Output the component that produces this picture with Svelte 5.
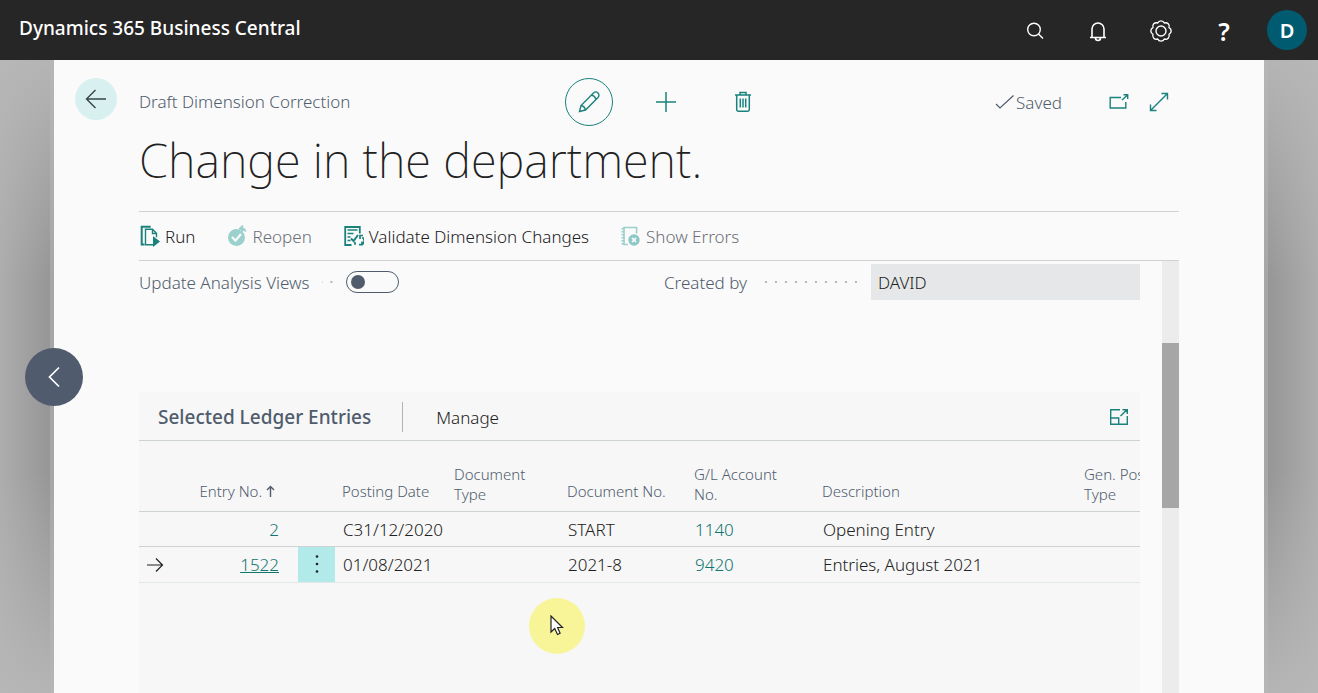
<script>
  let updateViews = $state(false);
  const entries = [
    { no: '2', date: 'C31/12/2020', doc: 'START', account: '1140', text: 'Opening Entry', current: false },
    { no: '1522', date: '01/08/2021', doc: '2021-8', account: '9420', text: 'Entries, August 2021', current: true }
  ];
</script>

<div class="page">
  <header class="top">
    <h1>Dynamics 365 Business Central</h1>
    <div class="tools">
      <button aria-label="Search"><svg width="20" height="20" viewBox="0 0 20 20"><circle cx="9" cy="8.500" r="6.300"/><path d="M13.500 13l4.500 4.500"/></svg></button>
      <button aria-label="Notifications"><svg width="20" height="22" viewBox="0 0 20 22"><path d="M2 17.500h16M4 17.500V9a6 6 0 0 1 12 0v8.500M7.500 18a2.500 2.500 0 0 0 5 0" stroke-width="1.600"/></svg></button>
      <button aria-label="Settings"><svg width="24" height="24" viewBox="0 0 24 24" stroke-linejoin="round"><circle cx="12" cy="12" r="5"/><path d="M20 15.300A3.600 3.600 0 0 1 15.300 20A3.600 3.600 0 0 1 8.700 20A3.600 3.600 0 0 1 4 15.300A3.600 3.600 0 0 1 4 8.700A3.600 3.600 0 0 1 8.700 4A3.600 3.600 0 0 1 15.300 4A3.600 3.600 0 0 1 20 8.700A3.600 3.600 0 0 1 20 15.300Z"/></svg></button>
      <button class="help" aria-label="Help">?</button>
    </div>
    <button class="avatar" aria-label="Account">D</button>
  </header>

  <div class="backdrop">
    <button class="previous" aria-label="Previous record"><svg width="14" height="22" viewBox="0 0 14 22"><path d="M12 1.500L2.500 11l9.500 9.500" stroke-width="1.700"/></svg></button>
    <main class="sheet">
      <button class="back" aria-label="Back"><svg width="22" height="20" viewBox="0 0 22 20"><path d="M21 10H2M10.500 1L1.500 10l9 9"/></svg></button>
      <div class="body">
        <div class="bar">
          <span class="caption">Draft Dimension Correction</span>
          <div class="actions">
            <button class="edit" aria-label="Edit"><svg width="24" height="24" viewBox="0 0 24 24"><path d="M2.500 21.500L4 15.500 16.500 3a3 3 0 0 1 4.500 4.500L8.500 20ZM4 15.500q3.500.5 4.500 4.500M14.500 5q3.500.8 4.500 4.500"/></svg></button>
            <button aria-label="New"><svg width="22" height="22" viewBox="0 0 22 22"><path d="M11 1v20M1 11h20" stroke-width="1.500"/></svg></button>
            <button aria-label="Delete"><svg width="18" height="22" viewBox="0 0 18 22"><path d="M1 4h16M6 3.500V1.500h6v2M2.700 4.500v14a1.700 1.700 0 0 0 1.700 1.700h9.200a1.700 1.700 0 0 0 1.700-1.700v-14M6.300 7.500v9M9 7.500v9M11.700 7.500v9" stroke-width="1.500"/></svg></button>
          </div>
          <div class="status">
            <span class="saved"><svg width="20" height="16" viewBox="0 0 20 16"><path d="M1 10l4 4L18.500 1.500" stroke-width="1.200"/></svg>Saved</span>
            <button class="open" aria-label="Open in new window"><svg width="20" height="18" viewBox="0 0 20 18"><path d="M12 4.500H1.200v10.500h15.600V9M13 7L18.500 2M14.500 1.700h4.200V6"/></svg></button>
            <button aria-label="Expand"><svg width="20" height="20" viewBox="0 0 20 20"><path d="M1.500 18.500l17-17M12.500 1.500h6v6M1.500 12.500v6h6"/></svg></button>
          </div>
        </div>
        <h2>Change in the department.</h2>
        <nav>
          <button><svg width="20" height="22" viewBox="0 0 20 22"><path d="M4.500 19.500H1.700V1.700h9" stroke-width="2"/><path d="M13 19.700H5.500V4.200h7l4 4v4M12.500 4.500v4h4"/><path d="M13.700 12.500l5.300 4-5.300 4Z" fill="#1a827c"/></svg>Run</button>
          <button class="off"><svg width="20" height="22" viewBox="0 0 20 22"><circle cx="9.500" cy="12.500" r="8.500" fill="#9bd0cd" stroke="none"/><path d="M5 12l3.500 3.700L14 9" stroke="#fafafa" stroke-width="2.200"/><path d="M19 6.500q-1-3.500-6-3" stroke="#fafafa" stroke-width="5"/><path d="M18.500 6.500q-1-3.500-5-3M16 .8l-3 2.700L16 6.300" stroke="#9bd0cd" stroke-width="2"/></svg>Reopen</button>
          <button><svg width="20" height="22" viewBox="0 0 20 22"><path d="M7.500 20H1.200V2h14.600v6.500" stroke-width="1.800"/><path d="M3.500 5h10M3.500 8.500h6M3.500 12h3M3.500 15.500h3"/><path d="M7 13.500l2.500 2.500 4.500-6" stroke-width="2"/><path d="M18.300 12.500a4 4 0 0 1-.3 7M18 16.500v3.200h-3M11.500 19.800a4 4 0 0 1-.5-3M16 14v-3.500h3" stroke-width="1.700"/></svg>Validate Dimension Changes</button>
          <button class="off"><svg width="20" height="22" viewBox="0 0 20 22"><path d="M7 19.500H3V2.500h12.600v6" stroke="#9bd0cd" stroke-width="1.600"/><path d="M2 3v17" stroke="#9bd0cd" stroke-width="3" stroke-dasharray="1.500 1.500"/><circle cx="13" cy="15" r="5.700" fill="#8cc8c5" stroke="none"/><path d="M10.900 12.900l4.200 4.200m0-4.200l-4.200 4.200" stroke="#fafafa" stroke-width="1.500"/></svg>Show Errors</button>
        </nav>
        <div class="view">
          <div class="content">
            <div class="fields">
              <div class="field">
                <label for="views">Update Analysis Views</label><i class="dots"></i>
                <input id="views" type="checkbox" role="switch" bind:checked={updateViews} />
              </div>
              <div class="field">
                <label for="creator">Created by</label><i class="dots"></i>
                <input id="creator" type="text" readonly value="DAVID" />
              </div>
            </div>
            <section>
              <div class="part">
                <h3>Selected Ledger Entries</h3>
                <button>Manage</button>
                <button class="focus" aria-label="Focus mode"><svg width="20" height="18" viewBox="0 0 20 18"><path d="M11 1.700H1.700v14.600h16.600V8M1.700 10h8v6.300M11.500 8L18 1.700M13.500 1.700h4.800V6"/></svg></button>
              </div>
              <table>
                <colgroup><col class="c-mark"/><col class="c-no"/><col class="c-menu"/><col class="c-date"/><col class="c-type"/><col class="c-doc"/><col class="c-acc"/><col/><col class="c-gen"/></colgroup>
                <thead>
                  <tr>
                    <th></th>
                    <th class="num">Entry No. <svg width="9" height="12" viewBox="0 0 9 12"><path d="M4.500 12V1.500M1 5l3.500-3.500L8 5"/></svg></th>
                    <th></th><th>Posting Date</th><th class="two">Document Type</th><th>Document No.</th><th class="two">G/L Account No.</th><th>Description</th><th class="two">Gen. Posting Type</th>
                  </tr>
                </thead>
                <tbody>
                  {#each entries as e}
                    <tr class:current={e.current}>
                      <td class="mark">{#if e.current}<svg width="17" height="16" viewBox="0 0 17 16"><path d="M0 8h15.500M9 1.500L15.500 8 9 14.500" stroke-width="1.200"/></svg>{/if}</td>
                      <td class="num"><a href="#entry">{e.no}</a></td>
                      <td class="menu">{#if e.current}<button aria-label="Row menu"><svg width="4" height="20" viewBox="0 0 4 20"><circle cx="2" cy="2.500" r="1.300"/><circle cx="2" cy="10" r="1.300"/><circle cx="2" cy="17.500" r="1.300"/></svg></button>{/if}</td>
                      <td>{e.date}</td><td></td><td>{e.doc}</td>
                      <td><a href="#account">{e.account}</a></td>
                      <td>{e.text}</td><td></td>
                    </tr>
                  {/each}
                </tbody>
              </table>
            </section>
          </div>
          <div class="track"><div class="thumb"></div></div>
        </div>
      </div>
    </main>
  </div>
  <div class="pointer"><svg width="14" height="22" viewBox="0 0 14 22"><path d="M1 1v16l3.700-3.500L7.500 19.500l2.600-1.200L7.600 12.500H12.500Z" fill="#fff" stroke="#222" stroke-width="1.200"/></svg></div>
</div>

<style>
  :global(body) { margin: 0; }
  * { box-sizing: border-box; }
  .page { height: 100vh; display: flex; flex-direction: column; position: relative; overflow: hidden; font-family: "Noto Sans", "Open Sans", sans-serif; font-size: 17px; font-weight: 300; color: #212121; }
  button { border: 0; padding: 0; background: none; font: inherit; color: inherit; display: flex; align-items: center; justify-content: center; }
  svg { fill: none; stroke: currentColor; stroke-width: 1.400; flex: none; display: block; }
  h1, h2, h3 { margin: 0; }
  .top { height: 60px; flex: none; background: #262626; color: #fff; display: flex; align-items: center; padding: 0 11px 0 19px; }
  h1 { font-size: 19px; line-height: 24px; font-weight: 500; padding-bottom: 4px; margin-right: auto; }
  .tools { display: flex; gap: 23px; margin-right: 23px; padding-top: 2px; }
  .tools button { width: 40px; height: 40px; }
  .tools .help { font-size: 25px; font-weight: 600; }
  .avatar { width: 40px; height: 40px; border-radius: 50%; background: #005b70; font-size: 20px; font-weight: 600; }
  .backdrop { flex: 1; min-height: 0; position: relative; display: flex; padding: 0 54px; background: linear-gradient(rgba(184, 184, 184, .9), rgba(184, 184, 184, 0) 35%, rgba(184, 184, 184, 0) 65%, rgba(184, 184, 184, .9)), linear-gradient(90deg, #adadad, #969696 50px, #a6a6a6 50px, #a6a6a6 calc(100% - 50px), #969696 calc(100% - 50px), #adadad); }
  .previous { position: absolute; left: 25px; top: 288px; width: 58px; height: 58px; border-radius: 50%; background: #505c6d; color: #fff; }
  .sheet { flex: 1; min-width: 0; background: #fafafa; display: flex; gap: 22px; padding: 18px 85px 0 21px; }
  .back { width: 42px; height: 42px; flex: none; border-radius: 50%; background: #d9f0f0; color: #36454c; }
  .body { flex: 1; min-width: 0; display: flex; flex-direction: column; }
  .bar { display: grid; grid-template-columns: 1fr auto 1fr; align-items: center; height: 48px; flex: none; color: #505c6d; }
  .caption { line-height: 24px; }
  .actions { display: flex; gap: 29px; padding-left: 14px; color: #1a827c; }
  .actions button { width: 48px; height: 48px; }
  .actions .edit { border: 1px solid #1a827c; border-radius: 50%; }
  .status { display: flex; justify-content: flex-end; align-items: center; padding-right: 10px; }
  .status button { color: #1a827c; }
  .saved { display: flex; align-items: center; gap: 1px; }
  .status .open { margin: 0 20px 0 47px; }
  h2 { font-size: 47px; line-height: 68px; font-weight: 200; margin-bottom: 17px; white-space: nowrap; }
  nav { height: 50px; flex: none; border-top: 1px solid #cfd1d2; border-bottom: 1px solid #cfd1d2; display: flex; gap: 32px; padding-left: 1px; }
  nav button { gap: 5px; }
  nav svg { color: #1a827c; }
  .off { color: #6b7078; }
  .view { flex: 1; min-height: 0; display: flex; }
  .content { flex: 1; min-width: 0; padding: 3px 22px 0 0; display: flex; flex-direction: column; }
  .fields { display: grid; grid-template-columns: 1fr 1fr; gap: 49px; margin-bottom: 92px; color: #505c6d; }
  .field { display: grid; grid-template-columns: auto 1fr 269px; align-items: center; height: 36px; }
  .dots { height: 2px; margin: 0 10px 0 12px; background: radial-gradient(circle, #b3b8be 1px, transparent 1px) right center / 10px 2px repeat-x; }
  .field input { appearance: none; margin: 0; font: inherit; color: #212121; }
  #views { width: 53px; height: 22px; border: 1px solid #505c6d; border-radius: 11px; padding: 0 4px; display: flex; align-items: center; }
  #views::before { content: ""; width: 14px; height: 14px; border-radius: 50%; background: #505c6d; }
  #views:checked { justify-content: flex-end; }
  #creator { width: 100%; height: 36px; border: 0; background: #e6e7e8; padding: 0 7px; }
  section { flex: 1; min-height: 0; background: #f7f7f7; overflow: hidden; }
  .part { height: 49px; display: flex; align-items: center; border-bottom: 1px solid #cdd2d3; padding: 2px 11px 0 19px; }
  h3 { font-size: 19px; line-height: 30px; font-weight: 500; color: #505c6d; padding-right: 31px; border-right: 1px solid #aeb4b8; margin-right: 33px; }
  .focus { margin-left: auto; color: #1a827c; }
  table { table-layout: fixed; width: calc(100% + 60px); border-collapse: collapse; }
  .c-mark { width: 40px; } .c-no { width: 119px; } .c-menu { width: 37px; } .c-date { width: 112px; } .c-type { width: 113px; } .c-doc { width: 127px; } .c-acc { width: 128px; } .c-gen { width: 123px; }
  th { height: 70px; vertical-align: bottom; text-align: left; font-size: 15px; line-height: 20px; font-weight: 300; color: #505c6d; padding: 0 20px 10px 7px; border-bottom: 1px solid #cdd2d3; white-space: nowrap; }
  th.two { white-space: normal; padding-bottom: 7px; }
  th svg { display: inline-block; }
  td { height: 35px; padding: 1px 0 0 8px; border-bottom: 1px solid #cdd2d3; white-space: nowrap; }
  .current td { height: 36px; border-bottom-color: #e2e7ea; }
  .num { text-align: right; }
  th.num { padding-right: 23px; }
  td.num { padding-right: 19px; }
  td a { color: #0f766e; text-decoration: none; }
  .current .num a { text-decoration: underline; }
  td.menu { padding: 0; }
  .menu button { width: 37px; height: 35px; background: #b2e9e9; }
  .menu svg { fill: #212121; stroke: none; }
  .track { width: 17px; background: #ececed; padding-top: 82px; }
  .thumb { height: 165px; background: #a6a6a6; }
  .pointer { position: absolute; left: 529px; top: 598px; width: 56px; height: 56px; border-radius: 50%; background: #f7f598; display: flex; align-items: center; justify-content: center; pointer-events: none; }
</style>
